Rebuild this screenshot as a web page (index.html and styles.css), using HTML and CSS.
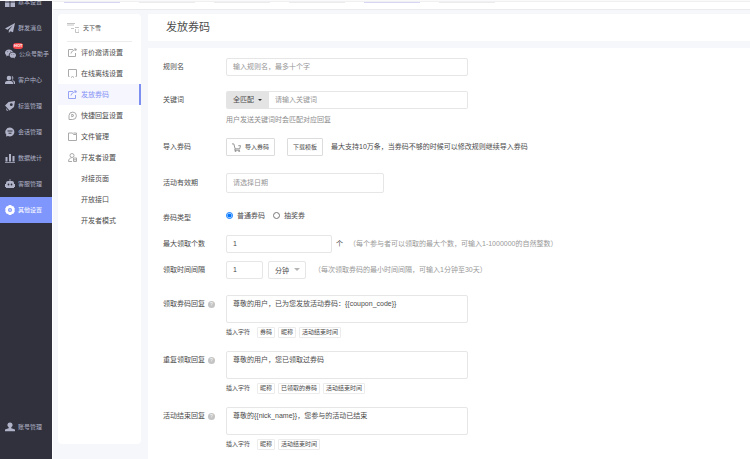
FILE: index.html
```html
<!DOCTYPE html>
<html lang="zh-CN">
<head>
<meta charset="utf-8">
<meta name="viewport" content="width=device-width, initial-scale=1">
<title>发放券码</title>
<link rel="stylesheet" href="styles.css">
</head>
<body>
<div class="app">
  <nav class="rail">
    <div class="rail-list">
      <a class="rail-item" href="#"><svg viewBox="0 0 10 10"><path d="M0 0h4.5v4.5H0zM5.5 0H10v4.5H5.5zM0 5.5h4.5V10H0zM5.5 5.5H10V10H5.5z"/></svg>基本设置</a>
      <a class="rail-item" href="#"><svg viewBox="0 0 10 10"><path d="M10 0 0 5.6l2.5 1.2L8 2.3 3.8 7.3V10l1.6-1.8L8 9.3z"/></svg>群发消息</a>
      <a class="rail-item" href="#"><svg class="wide" viewBox="0 0 12 10"><path d="M4.4 0C2 0 0 1.6 0 3.6c0 1.1.6 2 1.6 2.7L1.200 7.600l1.500-.8 1.400.2C3.700 4.600 5.600 2.800 8.600 2.800 8.100 1.100 6.400 0 4.400 0z"/><path d="M12 6.300c0-1.600-1.600-2.900-3.500-2.900S5 4.700 5 6.300s1.600 2.900 3.500 2.900l1.100-.2 1.300.8-.3-1.200C11.500 8.100 12 7.300 12 6.300z"/><g class="hole"><circle cx="3" cy="2.500" r=".5"/><circle cx="5.800" cy="2.500" r=".5"/><circle cx="7.400" cy="5.500" r=".4"/><circle cx="9.700" cy="5.500" r=".4"/></g></svg>公众号助手<span class="hot">HOT</span></a>
      <a class="rail-item" href="#"><svg viewBox="0 0 10 10"><circle cx="4" cy="3" r="2.300"/><path d="M0 9V8c0-1.600 1.600-2.300 4-2.300S8 6.400 8 8v1zM6.500.8a2.200 2.200 0 0 1 .3 4.300C9 5.500 10 6.400 10 7.500V9H8.700V7.800C8.700 6.500 8 5.800 6.700 5.300 7.700 4 7.500 2 6.500.8z"/></svg>客户中心</a>
      <a class="rail-item" href="#"><svg viewBox="0 0 10 10"><path d="M3.500 1 10 0 9 6 4.500 9.500 0 4.500zM1 7l2.500 3L1.500 9.500z"/><circle class="hole" cx="6.300" cy="3.700" r="1.400"/></svg>标签管理</a>
      <a class="rail-item" href="#"><svg viewBox="0 0 10 10"><path d="M5 .5a4.500 4.500 0 1 1-2 8.600L1 9.500l.3-1.700A4.500 4.500 0 0 1 5 .5z"/><path class="hole" d="M2.500 3.500h5v1h-5zM3.500 5.800h3v1h-3z"/></svg>会话管理</a>
      <a class="rail-item" href="#"><svg viewBox="0 0 10 10"><path d="M.5 4h2v4.500h-2zM4 1h2v7.500H4zM7.500 3h2v5.500h-2zM0 9.200h10v.8H0z"/></svg>数据统计</a>
      <a class="rail-item" href="#"><svg viewBox="0 0 10 10"><path d="M4.600 0h.8v2H7a2 2 0 0 1 2 2v1h1v3H9v1H1V8H0V5h1V4a2 2 0 0 1 2-2h1.600z"/><g class="hole"><circle cx="3.500" cy="5.500" r=".9"/><circle cx="6.500" cy="5.500" r=".9"/></g></svg>客服管理</a>
      <a class="rail-item active" href="#"><svg viewBox="0 0 10 10"><path d="M3.700 0h2.600l.5 1.300L8.200 1 10 4l-.8 1 .8 1-1.800 3-1.400-.3L6.300 10H3.700l-.5-1.300L1.800 9 0 6l.8-1L0 4l1.800-3 1.400.3z"/><circle class="hole" cx="5" cy="5" r="2"/><circle cx="5" cy="5" r=".8"/></svg>其他设置</a>
    </div>
    <a class="rail-item account" href="#"><svg viewBox="0 0 10 10"><path d="M5 .5a2.500 2.500 0 0 1 1.300 4.700v1L10 7.500v1.800H0V7.500l3.700-1.300v-1A2.500 2.500 0 0 1 5 .5z"/></svg>账号管理</a>
  </nav>

  <div class="page">
    <header class="topbar">
      <span class="tab on"></span><span class="tab"></span><span class="tab"></span><span class="tab"></span><span class="tab on"></span><span class="tab"></span>
    </header>
    <div class="columns">
      <aside class="side">
        <div class="side-head"><svg viewBox="0 0 12 10"><path d="M0 .5h8M0 2h7M4 5.500h3M8 4.500h4M8.500 6v3.500H12V6"/></svg>天下雪</div>
        <nav class="menu">
          <a href="#"><svg viewBox="0 0 9 9"><path d="M5 1.500H.5v7h7V5M3 5.500C3.500 3.500 5 2 8 1.500M6.500.5 8.500 1.300 7.500 3"/></svg>评价邀请设置</a>
          <a href="#"><svg viewBox="0 0 9 9"><path d="M1.500 7.500h-1v-7h8v7h-1M3 8.500l1.500-1 1.500 1"/></svg>在线离线设置</a>
          <a class="active" href="#"><svg viewBox="0 0 9 9"><path d="M5 1.500H.5v7h7V5M3 5.500C3.500 3.500 5 2 8 1.500M6.500.5 8.500 1.300 7.500 3"/></svg>发放券码</a>
          <a href="#"><svg viewBox="0 0 9 9"><path d="M1 8.500V4.500a3.700 3.700 0 1 1 3.700 4zM3.800 3l2.200 1.500L3.800 6z"/></svg>快捷回复设置</a>
          <a href="#"><svg viewBox="0 0 9 9"><path d="M.5 1h4l1 1.500h3v6h-8zM5.500 1h3v1.500"/></svg>文件管理</a>
          <a href="#"><svg viewBox="0 0 9 9"><circle cx="4" cy="2.500" r="2"/><path d="M4 8.500H.5C.5 6 2 5 3.500 4.800M5.500 5h3v3.500h-3zM5.500 6.800h3"/></svg>开发者设置</a>
          <a class="sub" href="#">对接页面</a>
          <a class="sub" href="#">开放接口</a>
          <a class="sub" href="#">开发者模式</a>
        </nav>
      </aside>

      <main class="main">
        <h1 class="title">发放券码</h1>
        <form class="form">
          <div class="row">
            <label class="name" for="rule">规则名</label>
            <input class="box full" id="rule" type="text" placeholder="输入规则名，最多十个字">
          </div>
          <div class="row">
            <label class="name" for="keyword">关键词</label>
            <div class="stack">
              <div class="group full"><button class="match" type="button">全匹配<i class="caret"></i></button><input class="box" id="keyword" type="text" placeholder="请输入关键词"></div>
              <p class="help">用户发送关键词时会匹配对应回复</p>
            </div>
          </div>
          <div class="row import-row">
            <span class="name">导入券码</span>
            <button class="btn import" type="button"><svg viewBox="0 0 10 10"><path d="M0 1h2l1.500 5.500h5L9.500 3H7M3.500 6.500 3 8h5.500"/><circle cx="4" cy="9" r=".6"/><circle cx="8" cy="9" r=".6"/></svg>导入券码</button>
            <button class="btn" type="button">下载模板</button>
            <span class="note">最大支持10万条，当券码不够的时候可以修改规则继续导入券码</span>
          </div>
          <div class="row date-row">
            <label class="name" for="date">活动有效期</label>
            <input class="box date" id="date" type="text" placeholder="请选择日期">
          </div>
          <div class="row type-row">
            <span class="name">券码类型</span>
            <label class="radio"><input type="radio" name="type" checked>普通券码</label>
            <label class="radio"><input type="radio" name="type">抽奖券</label>
          </div>
          <div class="row count-row">
            <label class="name" for="max">最大领取个数</label>
            <input class="box count" id="max" type="text" value="1">
            <span class="unit">个</span>
            <span class="hint">（每个参与者可以领取的最大个数，可输入1-1000000的自然整数）</span>
          </div>
          <div class="row gap-row">
            <label class="name" for="every">领取时间间隔</label>
            <input class="box every" id="every" type="text" value="1">
            <span class="pick"><select class="box" aria-label="时间单位"><option>分钟</option></select><i class="caret"></i></span>
            <span class="hint">（每次领取券码的最小时间间隔，可输入1分钟至30天）</span>
          </div>
          <div class="row reply">
            <label class="name" for="r1">领取券码回复<i class="q">?</i></label>
            <div class="stack">
              <textarea class="box full" id="r1">尊敬的用户，已为您发放活动券码：{{coupon_code}}</textarea>
              <div class="chips"><span>插入字符</span><button type="button">券码</button><button type="button">昵称</button><button type="button">活动结束时间</button></div>
            </div>
          </div>
          <div class="row reply">
            <label class="name" for="r2">重复领取回复<i class="q">?</i></label>
            <div class="stack">
              <textarea class="box full" id="r2">尊敬的用户，您已领取过券码</textarea>
              <div class="chips"><span>插入字符</span><button type="button">昵称</button><button type="button">已领取的券码</button><button type="button">活动结束时间</button></div>
            </div>
          </div>
          <div class="row reply">
            <label class="name" for="r3">活动结束回复<i class="q">?</i></label>
            <div class="stack">
              <textarea class="box full" id="r3">尊敬的{{nick_name}}，您参与的活动已结束</textarea>
              <div class="chips"><span>插入字符</span><button type="button">昵称</button><button type="button">活动结束时间</button></div>
            </div>
          </div>
        </form>
      </main>
    </div>
  </div>
</div>
</body>
</html>
```

FILE: styles.css
```css
* { box-sizing: border-box; }

body {
  margin: 0;
  color: #4c4c4c;
  background: #f6f7fb;
  font: 7px/10px "Liberation Sans", "Noto Sans CJK SC", sans-serif;
}

a { color: inherit; text-decoration: none; }
button, input, textarea, select { font: inherit; color: inherit; margin: 0; }
svg { flex: none; }

.app {
  display: flex;
  height: 100vh;
  overflow: hidden;
  border-top: 1px solid #fafafa;
}

/* Dark navigation rail */
.rail {
  flex: none;
  display: flex;
  flex-direction: column;
  justify-content: space-between;
  width: 53px;
  overflow: hidden;
  padding-bottom: 19px;
  background: #30313c;
  border-right: 1px solid #fff;
}
.rail-list { margin-top: -12px; }
.rail-item {
  position: relative;
  display: flex;
  align-items: center;
  gap: 3px;
  height: 26px;
  padding-left: 5px;
  color: #b1b3c9;
  font-size: 6px;
  white-space: nowrap;
}
.rail-item svg { width: 10px; height: 10px; fill: currentColor; }
.rail-item svg.wide { width: 11px; }
.rail-item .hole { fill: #30313c; }
.rail-item.active { background: #7f97fd; color: #fff; }
.rail-item.active .hole { fill: #7f97fd; }
.hot {
  position: absolute;
  top: 2px;
  left: 13px;
  padding: 0 1px;
  border-radius: 3px;
  background: #f5484b;
  color: #fff;
  font-size: 4px;
  font-weight: bold;
  line-height: 6px;
}

/* Page frame */
.page { flex: 1; min-width: 0; display: flex; flex-direction: column; }
.topbar {
  flex: none;
  display: flex;
  gap: 19px;
  height: 9px;
  padding-left: 11px;
  background: #fff;
  border-top: 1px solid #f0f0f2;
  border-bottom: 1px solid #e9ebee;
}
.tab { width: 56px; height: 1px; background: #ececee; }
.tab.on { background: #d5d7f3; }
.columns { flex: 1; display: flex; gap: 7px; min-height: 0; padding: 4px 0 0 5px; }

.side {
  flex: none;
  width: 83px;
  margin-bottom: 15px;
  background: #fff;
  border-radius: 4px;
}
.side-head {
  display: flex;
  align-items: center;
  gap: 4px;
  height: 28px;
  margin: 0 9px;
  border-bottom: 1px solid #ececee;
  font-size: 6px;
}
.side-head svg { width: 12px; height: 10px; fill: none; stroke: #c4c4c4; stroke-width: 1; }
.menu a {
  display: flex;
  align-items: center;
  gap: 4px;
  height: 21px;
  padding-left: 10px;
  border-right: 2px solid transparent;
}
.menu svg { width: 9px; height: 9px; fill: none; stroke: #aaa; stroke-width: 1; }
.menu .active { background: #f5f6fe; border-right-color: #7d8ff0; color: #8591f5; }
.menu .active svg { stroke: #98a2f5; }
.menu .sub { padding-left: 23px; }

.main { flex: 1; min-width: 0; display: flex; flex-direction: column; gap: 7px; }
.title {
  flex: none;
  margin: 0;
  padding: 0 18px;
  background: #fff;
  font-size: 11px;
  font-weight: normal;
  line-height: 27px;
}

/* Form */
.form { flex: 1; padding: 10px 15px 0; background: #fff; white-space: nowrap; }
.row { display: flex; align-items: flex-start; margin-bottom: 15px; line-height: 18px; }
.name { flex: none; display: flex; align-items: center; gap: 3px; width: 63px; }
.stack { flex: 1; min-width: 0; }
.box {
  height: 18px;
  padding: 0 6px;
  border: 1px solid #e6e6e6;
  border-radius: 2px;
  background: #fff;
  outline: 0;
}
.box::placeholder { color: #969696; opacity: 1; }
.full { display: block; width: 100%; max-width: 242px; }
.group { display: flex; }
.group .box { flex: 1; min-width: 0; border-left: 0; border-radius: 0 2px 2px 0; }
.match {
  display: flex;
  align-items: center;
  gap: 4px;
  height: 18px;
  padding: 0 7px;
  border: 0;
  border-radius: 2px 0 0 2px;
  background: #e4e4e4;
}
.caret { border: 2px solid transparent; border-top-color: #333; border-bottom: 0; }
.help { margin: 6px 0 -2px; color: #8c8c8c; line-height: 10px; }

.import-row { margin-bottom: 17px; }
.btn {
  display: flex;
  align-items: center;
  gap: 4px;
  height: 18px;
  margin-right: 8px;
  padding: 0 5px;
  border: 1px solid #dcdcdc;
  border-radius: 1px;
  background: #fff;
  font-size: 6px;
}
.btn.import { margin-right: 12px; }
.btn svg { width: 9px; height: 9px; fill: none; stroke: #8a8a8a; stroke-width: 1; }

.date-row { margin-bottom: 16px; line-height: 20px; }
.box.date { width: 158px; height: 20px; }
.type-row { margin-bottom: 8px; }
.radio { display: flex; align-items: center; gap: 4px; margin-right: 8px; line-height: 13px; }
.radio input { width: 7px; height: 7px; }

.count-row { margin-bottom: 8px; }
.box.count { width: 106px; }
.unit { margin: 0 6px 0 4px; }
.hint { color: #999; }
.gap-row { margin-bottom: 16px; }
.box.every { width: 37px; }
.pick { position: relative; width: 38px; height: 18px; margin: 0 8px 0 5px; }
.pick .box { display: block; width: 100%; appearance: none; }
.pick .caret { position: absolute; top: 7px; right: 6px; border-width: 3px 3px 0; border-top-color: #b5b5b5; }

.reply { margin-bottom: 13px; }
textarea.box { height: 28px; padding: 3px 6px; line-height: 10px; resize: none; overflow: hidden; }
.q {
  width: 7px;
  height: 7px;
  border-radius: 50%;
  background: #c4c4c4;
  color: #fff;
  font: 5px/7px "Liberation Sans", sans-serif;
  text-align: center;
}
.chips { display: flex; gap: 3px; margin-top: 4px; font-size: 6px; line-height: 11px; }
.chips span { margin-right: 4px; }
.chips button {
  height: 11px;
  padding: 0 2px;
  border: 1px solid #ececec;
  border-radius: 1px;
  background: #fff;
  line-height: 9px;
}
```
